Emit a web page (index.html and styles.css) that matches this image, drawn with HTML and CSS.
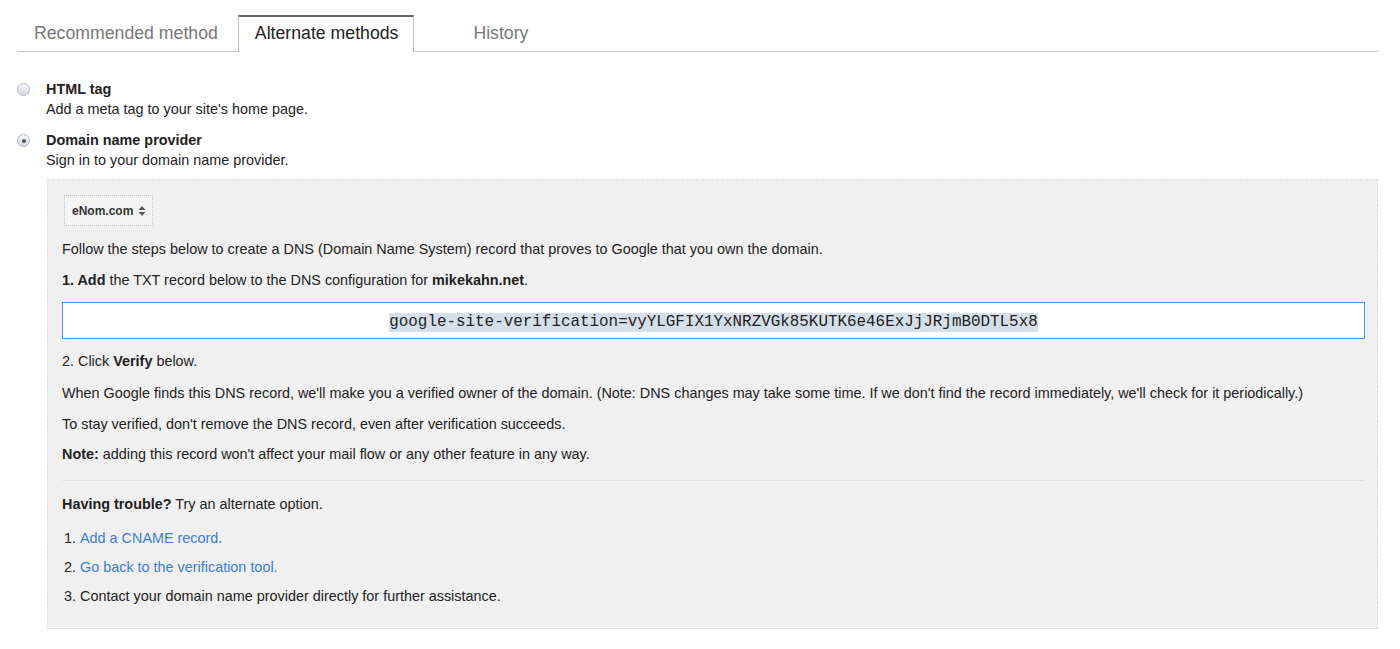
FILE: index.html
```html
<!DOCTYPE html>
<html>
<head>
<meta charset="utf-8">
<link rel="stylesheet" href="styles.css">
</head>
<body>
<div class="page">
  <div class="tabs">
    <div class="tab first">Recommended method</div>
    <div class="tab active">Alternate methods</div>
    <div class="tab history">History</div>
  </div>

  <div class="options">
    <div class="option">
      <span class="radio"></span>
      <div class="opt-text">
        <div class="opt-title">HTML tag</div>
        <div class="opt-desc">Add a meta tag to your site's home page.</div>
      </div>
    </div>
    <div class="option">
      <span class="radio checked"></span>
      <div class="opt-text">
        <div class="opt-title">Domain name provider</div>
        <div class="opt-desc">Sign in to your domain name provider.</div>
      </div>
    </div>
  </div>

  <div class="panel">
    <div class="select">eNom.com <span class="arrows"><svg width="8" height="12" viewBox="0 0 8 12"><path d="M4 1 L7.5 5 H0.5 Z M4 11 L7.5 7 H0.5 Z" fill="#555"/></svg></span></div>
    <p class="line l-follow">Follow the steps below to create a DNS (Domain Name System) record that proves to Google that you own the domain.</p>
    <p class="line l-add"><b>1. Add</b> the TXT record below to the DNS configuration for <b>mikekahn.net</b>.</p>
    <div class="record"><span class="sel">google-site-verification=vyYLGFIX1YxNRZVGk85KUTK6e46ExJjJRjmB0DTL5x8</span></div>
    <p class="line l-click">2. Click <b>Verify</b> below.</p>
    <p class="line l-when">When Google finds this DNS record, we'll make you a verified owner of the domain. (Note: DNS changes may take some time. If we don't find the record immediately, we'll check for it periodically.)</p>
    <p class="line l-stay">To stay verified, don't remove the DNS record, even after verification succeeds.</p>
    <p class="line l-note"><b>Note:</b> adding this record won't affect your mail flow or any other feature in any way.</p>
    <div class="divider"></div>
    <p class="line l-trouble"><b>Having trouble?</b> Try an alternate option.</p>
    <ol class="alts">
      <li><a href="#">Add a CNAME record.</a></li>
      <li><a href="#">Go back to the verification tool.</a></li>
      <li>Contact your domain name provider directly for further assistance.</li>
    </ol>
  </div>
</div>
</body>
</html>
```

FILE: styles.css
```css
html, body {
  margin: 0;
  padding: 0;
  background: #fff;
}
body {
  font-family: "Liberation Sans", Arial, sans-serif;
  color: #222;
  font-size: 14.4px;
}
.page {
  padding: 15px 22px 0 17px;
}
.tabs {
  display: flex;
  border-bottom: 1px solid #c6c6c6;
  height: 36px;
}
.tab {
  font-size: 17.7px;
  color: #777;
  padding: 0 16px;
  line-height: 34px;
  height: 35px;
  border: 1px solid transparent;
  border-bottom: none;
}
.tab.first {
  padding-right: 19px;
}
.tab.active {
  color: #222;
  border-color: #b8bfc9;
  border-top: 2px solid #666;
  line-height: 33px;
  background: #fff;
  margin-bottom: -1px;
  height: 35px;
  padding: 0 15px 0 16px;
}
.tab.history {
  padding-left: 58px;
}
.options {
  margin-top: 28px;
}
.option {
  display: flex;
  margin-bottom: 11px;
}
.option:last-child {
  margin-bottom: 8px;
}
.radio {
  width: 13px;
  height: 13px;
  border-radius: 50%;
  border: 1px solid #b3b9c3;
  background: linear-gradient(#f6f7fa, #d3d9e3);
  margin: 3px 16px 0 0;
  box-sizing: border-box;
  position: relative;
  flex: none;
}
.radio.checked::after {
  content: "";
  position: absolute;
  left: 3.5px;
  top: 3.5px;
  width: 4px;
  height: 4px;
  border-radius: 50%;
  background: #555;
}
.opt-title {
  font-weight: bold;
  color: #222;
  line-height: 19px;
}
.opt-desc {
  line-height: 21px;
  color: #222;
}
.panel {
  margin: 0 0 0 30px;
  background: #f0f0f0;
  border: 1px dashed #d7e1ec;
  border-bottom: 1px solid #d7e1ec;
  padding: 15px 12px 22px 14px;
}
.select {
  display: inline-flex;
  align-items: center;
  height: 31px;
  box-sizing: border-box;
  padding: 0 6px 0 7px;
  margin-left: 2px;
  border: 1px dotted #b7c3d3;
  font-size: 12px;
  font-weight: bold;
  color: #333;
  background: #f4f4f4;
  gap: 5px;
}
.arrows {
  display: inline-flex;
}
.line {
  margin: 0;
  line-height: 20px;
  color: #222;
}
.l-follow { margin-top: 13px; }
.l-add { margin-top: 11px; }
.record {
  margin-top: 12px;
  height: 37px;
  box-sizing: border-box;
  padding-top: 3px;
  background: #fff;
  border: 1px solid #4d90fe;
  display: flex;
  align-items: center;
  justify-content: center;
  font-family: "Liberation Mono", "DejaVu Sans Mono", monospace;
  font-size: 15.9px;
  color: #222;
}
.sel {
  background: #d5dfea;
  line-height: 19px;
}
.l-click { margin-top: 12px; }
.l-when { margin-top: 12px; }
.l-stay { margin-top: 11px; }
.l-note { margin-top: 10px; }
.divider {
  margin-top: 16px;
  border-top: 1px dotted #c9d6e6;
}
.l-trouble { margin-top: 13px; }
.alts {
  margin: 14px 0 0 0;
  padding-left: 18px;
}
.alts li {
  line-height: 20px;
  margin-bottom: 9px;
  padding-left: 0;
}
.alts li:last-child { margin-bottom: 0; }
.alts a {
  color: #3b7ddd;
  text-decoration: none;
}
```
